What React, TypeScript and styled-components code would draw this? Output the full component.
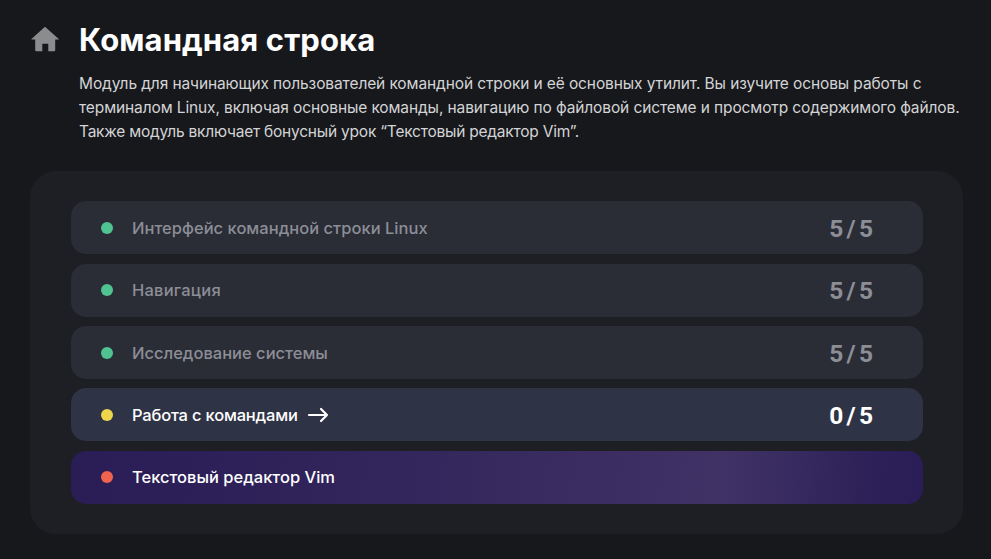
import React from "react";
import styled, { createGlobalStyle, css } from "styled-components";

type Status = "done" | "active" | "bonus";

interface Lesson {
  title: string;
  status: Status;
  tracking: number;
  score?: string;
}

const lessons: Lesson[] = [
  { title: "Интерфейс командной строки Linux", status: "done", tracking: 0.02, score: "5 / 5" },
  { title: "Навигация", status: "done", tracking: 0.22, score: "5 / 5" },
  { title: "Исследование системы", status: "done", tracking: 0, score: "5 / 5" },
  { title: "Работа с командами", status: "active", tracking: -0.19, score: "0 / 5" },
  { title: "Текстовый редактор Vim", status: "bonus", tracking: 0 },
];

const description = [
  { text: "Модуль для начинающих пользователей командной строки и её основных утилит. Вы изучите основы работы с", tracking: -0.108 },
  { text: "терминалом Linux, включая основные команды, навигацию по файловой системе и просмотр содержимого файлов.", tracking: -0.112 },
  { text: "Также модуль включает бонусный урок “Текстовый редактор Vim”.", tracking: -0.225 },
];

const GlobalStyle = createGlobalStyle`
  * { box-sizing: border-box; }
  body {
    margin: 0;
    background: #17181c;
    font-family: Inter, "Noto Sans", sans-serif;
    overflow: hidden;
  }
`;

const Page = styled.main`
  display: flex;
  flex-direction: column;
  height: 559px;
  padding: 20px 28px 0 30px;
`;

const Header = styled.header`
  display: grid;
  grid-template-columns: 30px 1fr;
  column-gap: 19px;
  height: 151px;
`;

const HomeIcon = styled.svg`
  width: 30px;
  height: 40px;
  fill: #8b8c8e;
`;

const Title = styled.h1`
  margin: 0;
  color: #fff;
  font-size: 31px;
  font-weight: 700;
  line-height: 40px;
  letter-spacing: 0.1px;
  white-space: nowrap;
`;

const Description = styled.div`
  margin-top: 12px;
`;

const DescriptionLine = styled.p<{ $tracking: number }>`
  margin: 0;
  color: #d3d4d5;
  font-size: 15.5px;
  line-height: 23.8px;
  letter-spacing: ${({ $tracking }) => $tracking}px;
  white-space: nowrap;
`;

const Panel = styled.section`
  display: flex;
  flex-direction: column;
  gap: 9.4px;
  height: 363px;
  padding: 30.3px 40px 0 41px;
  border-radius: 26px;
  background: #1e1f24;
`;

const rowTones = {
  done: css`
    background: #2a2c36;
    color: #8c8e96;
  `,
  active: css`
    background: #2f3346;
    color: #fff;
  `,
  bonus: css`
    background: linear-gradient(95deg, #2a1d56 0%, #2e2159 20%, #35285d 45%, #3b2d61 62%, #403265 76%, #382b60 84%, #2e2159 93%, #2a1c56 100%);
    color: #fff;
  `,
};

const Row = styled.div<{ $status: Status }>`
  display: flex;
  align-items: center;
  height: 53px;
  padding: 0 50px 0 29.5px;
  border-radius: 15px;
  ${({ $status }) => rowTones[$status]}
`;

const dotColors = { done: "#50c393", active: "#edd54c", bonus: "#f0644f" };

const Dot = styled.span<{ $status: Status }>`
  width: 12px;
  height: 12px;
  margin-right: 19.5px;
  border-radius: 50%;
  background: ${({ $status }) => dotColors[$status]};
`;

const RowTitle = styled.span<{ $tracking: number }>`
  font-size: 16.5px;
  font-weight: 500;
  line-height: 24px;
  letter-spacing: ${({ $tracking }) => $tracking}px;
  white-space: nowrap;
`;

const Arrow = styled.svg`
  width: 22px;
  height: 16px;
  margin-left: 9px;
  fill: none;
  stroke: currentColor;
  stroke-width: 2.2;
  stroke-linecap: round;
  stroke-linejoin: round;
`;

const Score = styled.span`
  margin-left: auto;
  padding-top: 2px;
  font-family: Roboto, sans-serif;
  font-size: 24.5px;
  font-weight: 700;
  line-height: 30px;
  word-spacing: -2.8px;
  white-space: nowrap;
`;

export default function App() {
  return (
    <>
      <GlobalStyle />
      <Page>
        <Header>
          <HomeIcon viewBox="0 0 30 40">
            <path d="M15 6.8 29 19.2Q29.2 19.6 28.6 19.6H25.2V30.2Q25.2 31.2 24.2 31.2H18.3V23.8H12.3V31.2H6.2Q5.2 31.2 5.2 30.2V19.6H1.8Q1 19.6 1.4 19.1Z" />
          </HomeIcon>
          <div>
            <Title>Командная строка</Title>
            <Description>
              {description.map(({ text, tracking }) => (
                <DescriptionLine key={text} $tracking={tracking}>{text}</DescriptionLine>
              ))}
            </Description>
          </div>
        </Header>
        <Panel>
          {lessons.map(({ title, status, tracking, score }) => (
            <Row key={title} $status={status}>
              <Dot $status={status} />
              <RowTitle $tracking={tracking}>{title}</RowTitle>
              {status === "active" && (
                <Arrow viewBox="0 0 22 16">
                  <path d="M2 8H20M14 2 20 8 14 14" />
                </Arrow>
              )}
              {score && <Score>{score}</Score>}
            </Row>
          ))}
        </Panel>
      </Page>
    </>
  );
}
